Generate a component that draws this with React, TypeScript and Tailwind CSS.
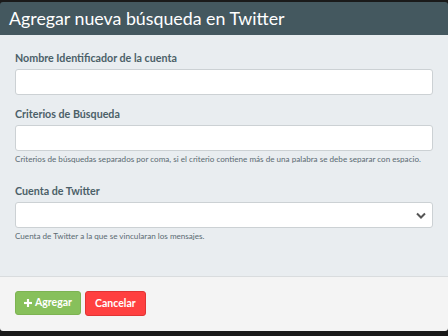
import React from 'react';

const font = { fontFamily: 'Lato, "Open Sans", sans-serif' };

function Field({ label, help, select }: { label: string; help?: string; select?: boolean }) {
  return (
    <div className="flex flex-col">
      <label className="text-[10.7px] font-bold text-[#4b6068] leading-[14px] mb-[4px]">{label}</label>
      {select ? (
        <div className="h-[26px] bg-white border border-[#ccd1d4] rounded-[3px] flex items-center justify-end pr-[6px]">
          <svg width="10" height="7" viewBox="0 0 10 7" fill="none" stroke="#555" strokeWidth="2">
            <path d="M1 1.5l4 4 4-4" />
          </svg>
        </div>
      ) : (
        <div className="h-[26px] bg-white border border-[#ccd1d4] rounded-[3px]" />
      )}
      {help && <p className="text-[8.1px] text-[#5b6b72] leading-[10px] mt-[3px]">{help}</p>}
    </div>
  );
}

export default function App() {
  return (
    <div className="w-[448px] h-[336px] bg-[#1a1a1a] pt-[2px] overflow-hidden" style={font}>
      <div className="h-[329px] flex flex-col rounded-[3px] overflow-hidden">
        {/* Header */}
        <header className="h-[33px] bg-[#44585f] flex items-center px-[9px] shrink-0">
          <h1 className="text-[17.8px] text-white leading-none">Agregar nueva búsqueda en Twitter</h1>
        </header>

        {/* Body */}
        <div className="h-[242px] bg-[#e9edf0] px-[15px] pt-[16px] flex flex-col border-b border-[#d9dcde] shrink-0">
          <Field label="Nombre Identificador de la cuenta" />
          <div className="mt-[12px]">
            <Field
              label="Criterios de Búsqueda"
              help="Criterios de búsquedas separados por coma, si el criterio contiene más de una palabra se debe separar con espacio."
            />
          </div>
          <div className="mt-[20px]">
            <Field label="Cuenta de Twitter" help="Cuenta de Twitter a la que se vincularan los mensajes." select />
          </div>
        </div>

        {/* Footer */}
        <footer className="flex-1 bg-[#f4f4f4] px-[15px] pt-[14px] flex gap-[4px] items-start">
          <button className="h-[24px] px-[8px] rounded-[3px] bg-[#87c05b] border border-[#7db352] text-white text-[10.5px] font-bold flex items-center gap-[3px]">
            <svg width="8" height="8" viewBox="0 0 9 9" fill="white">
              <rect x="3.3" y="0" width="2.4" height="9" />
              <rect x="0" y="3.3" width="9" height="2.4" />
            </svg>
            Agregar
          </button>
          <button className="h-[25px] px-[9px] rounded-[3px] bg-[#ff4040] border border-[#e03434] text-white text-[10.5px] font-bold">
            Cancelar
          </button>
        </footer>
      </div>
    </div>
  );
}
